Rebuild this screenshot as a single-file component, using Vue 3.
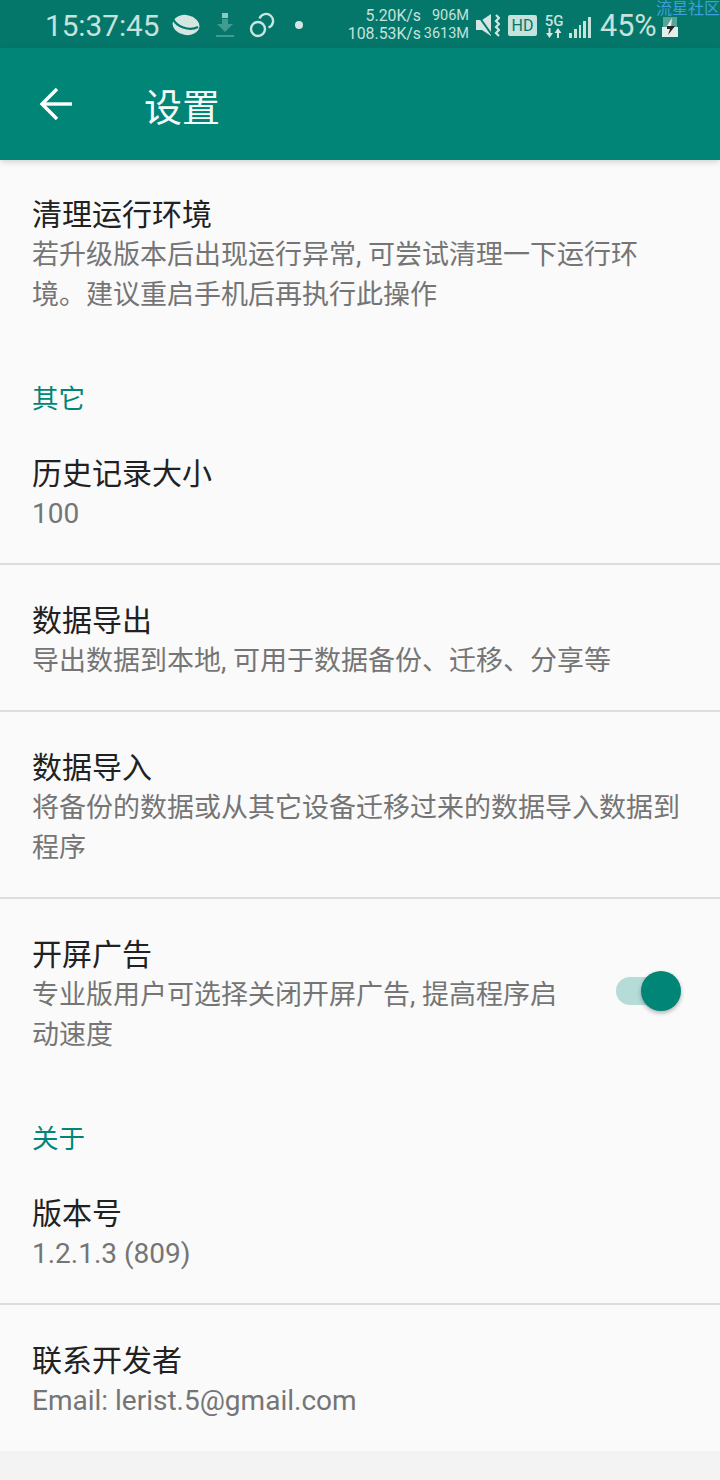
<template>
  <div class="page">
    <div class="statusbar">
      <span class="clock">15:37:45</span>
      <svg class="ic-planet" width="28" height="24" viewBox="0 0 28 24">
        <ellipse cx="14" cy="12" rx="13.500" ry="10" fill="#d3e6e2" transform="rotate(10 14 12)" />
        <path d="M1 6C4 13 17 19 26 14" fill="none" stroke="#04776a" stroke-width="2.200" />
      </svg>
      <svg class="ic-dl" width="18" height="24" viewBox="0 0 18 24">
        <rect x="6" y="0" width="6" height="5" fill="#8fcabf" />
        <path d="M6 6h6v5h5l-8 8-8-8h5z" fill="#3f9c8f" />
        <rect x="0" y="22" width="18" height="2" fill="#3f9c8f" />
      </svg>
      <svg class="ic-link" width="26" height="26" viewBox="0 0 26 26" fill="none" stroke="#c6e6df" stroke-width="2.400">
        <circle cx="9" cy="17" r="7" />
        <path d="M10.500 6.500A7 7 0 1 1 19.500 15.500" />
      </svg>
      <span class="dot"></span>
      <div class="speed">
        <span>5.20K/s</span>
        <span>108.53K/s</span>
      </div>
      <div class="mem">
        <span>906M</span>
        <span>3613M</span>
      </div>
      <svg class="ic-mute" width="24" height="24" viewBox="0 0 24 24">
        <path d="M0 7h6l9-6v22l-9-6H0z" fill="#d3e6e2" />
        <path d="M1 1l15 21" stroke="#04776a" stroke-width="2" />
        <path d="M20 2l3 3-3 3 3 3-3 3 3 3-3 3 3 3" fill="none" stroke="#d3e6e2" stroke-width="2.200" />
      </svg>
      <span class="hd">HD</span>
      <div class="net">
        <span>5G</span>
        <svg width="18" height="10" viewBox="0 0 18 10" fill="#d3e6e2">
          <path d="M3.500 0h2v5H8l-3.500 5L1 5h2.500z" />
          <path d="M13 0l3.500 5H14v5h-2V5H9.500z" />
        </svg>
      </div>
      <div class="signal">
        <i v-for="h in bars" :key="h" :style="{ height: h + 'px' }"></i>
      </div>
      <span class="pct">45%</span>
      <svg class="ic-batt" width="16" height="20" viewBox="0 0 16 20">
        <rect x="1" y="0" width="14" height="10" fill="#5aa497" />
        <rect x="0" y="10" width="16" height="10" fill="#e3efec" />
        <path d="M10 1L5 9h4z" fill="#e3efec" />
        <path d="M5 9h8l-7 9 2-6H5z" fill="#222" />
      </svg>
      <span class="mark">流星社区</span>
    </div>

    <div class="toolbar">
      <svg width="36" height="36" viewBox="0 0 36 36" fill="none" stroke="#fff" stroke-width="3.400">
        <path d="M34 18H4" />
        <path d="M19 3L4 18l15 15" />
      </svg>
      <span class="title">设置</span>
    </div>

    <div class="list">
      <template v-for="group in groups" :key="group.name">
        <div v-if="group.name" class="section">{{ group.name }}</div>
        <div
          v-for="(item, i) in group.items"
          :key="item.title"
          class="item"
          :class="{ line: i < group.items.length - 1, first: !group.name }"
        >
          <div class="text">
            <div class="item-title">{{ item.title }}</div>
            <div class="item-sub" :class="{ latin: item.latin }">{{ item.sub }}</div>
          </div>
          <div v-if="item.toggle" class="switch">
            <span class="track"></span>
            <span class="thumb"></span>
          </div>
        </div>
      </template>
    </div>
  </div>
</template>

<script setup>
const bars = [5, 9, 13, 17, 21];

const groups = [
  {
    name: "",
    items: [
      {
        title: "清理运行环境",
        sub: "若升级版本后出现运行异常, 可尝试清理一下运行环境。建议重启手机后再执行此操作",
      },
    ],
  },
  {
    name: "其它",
    items: [
      { title: "历史记录大小", sub: "100", latin: true },
      { title: "数据导出", sub: "导出数据到本地, 可用于数据备份、迁移、分享等" },
      { title: "数据导入", sub: "将备份的数据或从其它设备迁移过来的数据导入数据到程序" },
      {
        title: "开屏广告",
        sub: "专业版用户可选择关闭开屏广告, 提高程序启动速度",
        toggle: true,
      },
    ],
  },
  {
    name: "关于",
    items: [
      { title: "版本号", sub: "1.2.1.3 (809)", latin: true },
      { title: "联系开发者", sub: "Email: lerist.5@gmail.com", latin: true },
    ],
  },
];
</script>

<style>
body {
  background: #f3f3f3;
}
</style>

<style scoped>
.page {
  font-family: Roboto, "Noto Sans CJK SC", sans-serif;
  height: 1480px;
  overflow: hidden;
  background: #f3f3f3;
}

.statusbar {
  position: relative;
  height: 48px;
  background: #04776a;
  color: #c6e2dd;
  display: flex;
  align-items: center;
  padding-left: 45px;
}
.clock {
  font-size: 29.7px;
  width: 127px;
  margin-top: 2px;
}
.ic-planet {
  margin-top: 1px;
}
.ic-dl {
  margin-left: 16px;
  margin-top: 1px;
}
.ic-link {
  margin-left: 15px;
  margin-top: 2px;
}
.dot {
  width: 8px;
  height: 8px;
  border-radius: 50%;
  background: #d3e6e2;
  margin-left: 20px;
  margin-top: 2px;
}
.speed,
.mem {
  display: flex;
  flex-direction: column;
  align-items: flex-end;
  line-height: 18px;
  white-space: nowrap;
  margin-top: 2px;
}
.speed {
  width: 118px;
  font-size: 15.8px;
}
.mem {
  width: 48px;
  font-size: 14.5px;
}
.ic-mute {
  margin-left: 7px;
  margin-top: 2px;
}
.hd {
  width: 29px;
  height: 21px;
  border-radius: 2px;
  background: #c6e2dd;
  color: #04776a;
  font-size: 16px;
  line-height: 21px;
  text-align: center;
  margin-left: 8px;
  margin-top: 3px;
}
.net {
  display: flex;
  flex-direction: column;
  align-items: center;
  width: 18px;
  margin-left: 8px;
  margin-top: 3px;
  font-size: 15px;
  font-weight: 500;
  line-height: 14px;
}
.signal {
  display: flex;
  align-items: flex-end;
  gap: 2px;
  height: 21px;
  margin-left: 6px;
  margin-top: 6px;
}
.signal i {
  width: 2.8px;
  background: #c6e2dd;
}
.pct {
  font-size: 30.5px;
  margin-left: 9px;
  margin-top: 2px;
}
.ic-batt {
  margin-left: 5px;
  margin-top: 6px;
}
.mark {
  position: absolute;
  top: 0;
  right: 0;
  font-size: 16px;
  line-height: 17px;
  color: #3f9fdc;
  white-space: nowrap;
}

.toolbar {
  height: 112px;
  background: #008577;
  display: flex;
  align-items: center;
  padding-left: 38px;
  position: relative;
  box-shadow: 0 2px 6px rgba(0, 0, 0, 0.16);
}
.title {
  font-size: 38px;
  color: #f2fbf9;
  margin-left: 70px;
}

.list {
  background: #fafafa;
}
.section {
  font-size: 26.5px;
  line-height: 36px;
  color: #008577;
  padding: 36px 32px 0;
  height: 37px;
  box-sizing: content-box;
}
.item {
  display: flex;
  align-items: center;
  padding: 36px 32px 30px 32px;
}
.item.first {
  padding-top: 35px;
}
.item.line {
  padding-bottom: 29px;
  border-bottom: 2px solid #dddddd;
}
.text {
  flex: 1;
  min-width: 0;
}
.item-title {
  font-size: 30px;
  line-height: 40px;
  color: #212121;
}
.item-sub {
  font-size: 27px;
  line-height: 40px;
  color: #757575;
}
.item-sub.latin {
  font-size: 28px;
}
.switch {
  position: relative;
  flex: none;
  width: 65px;
  height: 40px;
  margin-left: 40px;
  margin-right: 7px;
  margin-top: -8px;
}
.track {
  position: absolute;
  left: 0;
  top: 6px;
  width: 56px;
  height: 28px;
  border-radius: 14px;
  background: #b6dcd8;
}
.thumb {
  position: absolute;
  right: 0;
  top: 0;
  width: 40px;
  height: 40px;
  border-radius: 50%;
  background: #008577;
  box-shadow: 0 2px 4px rgba(0, 0, 0, 0.3);
}
</style>
